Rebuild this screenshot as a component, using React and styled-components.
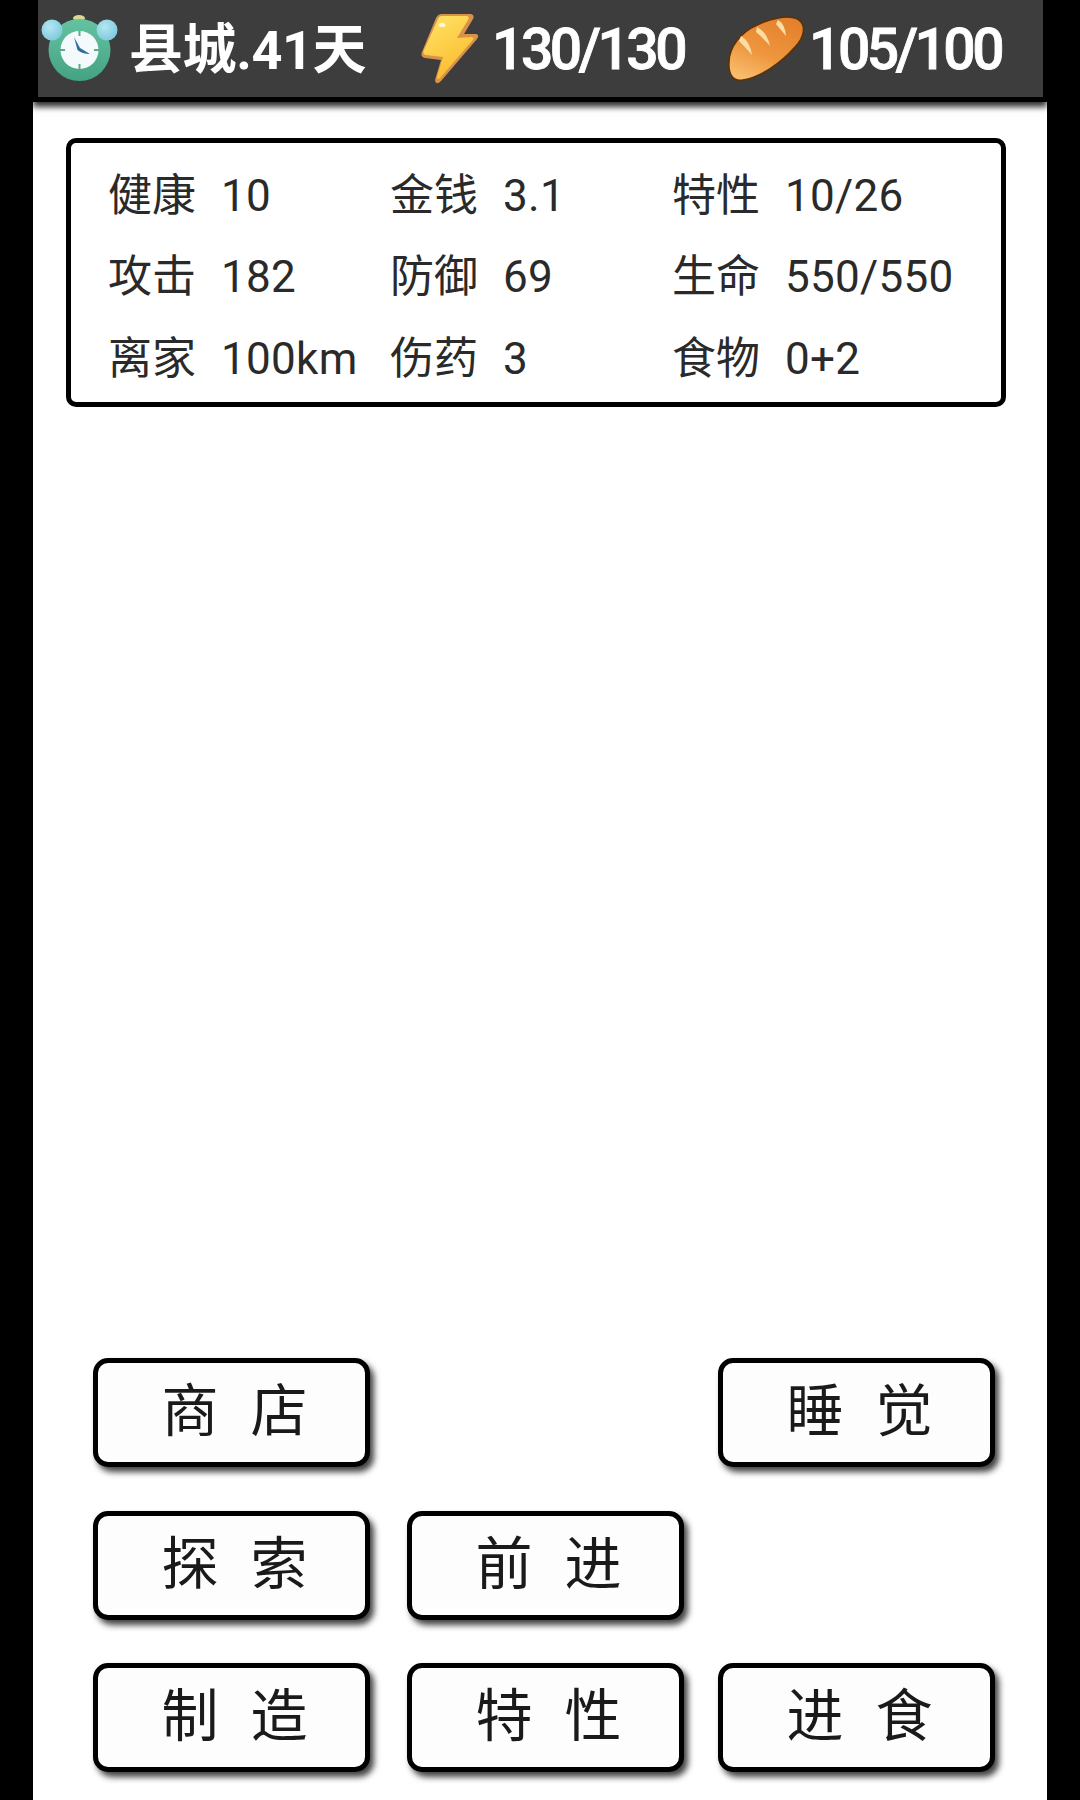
import React from "react";
import styled, { createGlobalStyle } from "styled-components";

const GlobalStyle = createGlobalStyle`
	html, body {
		margin: 0;
		padding: 0;
		background: #000;
	}
`;

const Screen = styled.div`
	width: 1014px;
	height: 1800px;
	margin-left: 33px;
	background: #fff;
	display: flex;
	flex-direction: column;
	overflow: hidden;
	font-family: Roboto, "Noto Sans CJK SC", sans-serif;
`;

const Header = styled.header`
	height: 102px;
	flex: none;
	background: #000;
	padding: 0 4px 5px 5px;
	box-sizing: border-box;
	box-shadow: 0 5px 6px rgba(0, 0, 0, 0.8);
`;

const Bar = styled.div`
	height: 97px;
	background: #3d3d3d;
	display: flex;
	align-items: center;
	padding-left: 3px;
	color: #fff;
	font-family: Roboto, "Noto Sans CJK SC", sans-serif;
	font-weight: 700;
`;

const Stat = styled.div`
	width: ${({ $width }) => $width}px;
	flex: none;
	display: flex;
	align-items: center;
	gap: ${({ $gap }) => $gap}px;
`;

const StatIcon = styled.svg`
	flex: none;
	display: block;
`;

const Place = styled.span`
	font-size: 54px;
	line-height: 60px;
	padding-top: 4px;
	letter-spacing: -0.4px;
	white-space: nowrap;
	margin-left: -2px;
`;

const Count = styled.span`
	font-size: 57px;
	line-height: 60px;
	padding-top: 2px;
	letter-spacing: -3.5px;
	font-weight: 500;
	white-space: nowrap;
	-webkit-text-stroke: 0.8px #fff;
`;

const Panel = styled.section`
	margin: 36px 41px 0 33px;
	height: 269px;
	box-sizing: border-box;
	border: 5px solid #000;
	border-radius: 10px;
	padding: 12px 0 0 37px;
	display: grid;
	grid-template-columns: 282px 282px 1fr;
	grid-auto-rows: 81.5px;
	color: #2a2a2a;
`;

const Cell = styled.div`
	display: flex;
	align-items: center;
	font-size: 44px;
	line-height: 1;
	white-space: nowrap;
`;

const Label = styled.span`
	width: 113px;
	flex: none;
	font-size: 44px;
	font-weight: 400;
`;

const Value = styled.span`
	font-weight: 400;
	letter-spacing: 0.3px;
`;

const Actions = styled.nav`
	margin-top: auto;
	padding: 0 0 28px 60px;
	display: grid;
	grid-template-columns: 314px 311px 277px;
	grid-auto-rows: 109px;
	row-gap: 43.5px;
`;

const ActionButton = styled.button`
	width: 277px;
	height: 109px;
	grid-column: ${({ $col }) => $col};
	box-sizing: border-box;
	border: 5px solid #000;
	border-radius: 15px;
	background: #fdfdfd;
	box-shadow: 4px 5px 6px rgba(0, 0, 0, 0.75);
	color: #1a1a1a;
	font-family: "Noto Sans CJK SC", sans-serif;
	font-size: 57px;
	line-height: 1;
	font-weight: 400;
	word-spacing: 19px;
	padding: 0 0 12px 6px;
`;

const ClockIcon = () => (
	<StatIcon width="77" height="68" viewBox="11 8 77 68">
		<defs>
			<linearGradient id="clockBody" x1="0" y1="0" x2="0" y2="1">
				<stop offset="0" stopColor="#63c3a0" />
				<stop offset="1" stopColor="#45a283" />
			</linearGradient>
			<radialGradient id="clockBell" cx="0.4" cy="0.35" r="0.7">
				<stop offset="0" stopColor="#b4e6f2" />
				<stop offset="1" stopColor="#7cc9dc" />
			</radialGradient>
		</defs>
		<ellipse cx="49" cy="11" rx="6" ry="3" fill="#d9d890" />
		<circle cx="49.5" cy="43" r="31" fill="url(#clockBody)" />
		<circle cx="22" cy="23" r="10.5" fill="url(#clockBell)" />
		<circle cx="77" cy="23" r="10.5" fill="url(#clockBell)" />
		<circle cx="49.5" cy="43" r="19" fill="#f4fafb" />
		<path d="M49.5 24v5M49.5 57v5M30 43h5M64 43h5" stroke="#5fa78f" strokeWidth="2" />
		<path d="M44 30 L47.5 43 Q52 47 60 47 L50 41 Z" fill="#2f6d9e" />
	</StatIcon>
);

const BoltIcon = () => (
	<StatIcon width="60" height="72" viewBox="10 8 60 72">
		<defs>
			<linearGradient id="boltFace" x1="0" y1="0" x2="0.5" y2="1">
				<stop offset="0" stopColor="#ffe56a" />
				<stop offset="1" stopColor="#fbbc2e" />
			</linearGradient>
		</defs>
		<path
			d="M32 9 L61 9 Q65 10 63 14 L54 29 L66 29 Q70 30 67 34 L31 76 Q26 81 25 75 L31 55 L15 53 Q10 52 12 47 L26 13 Q28 9 32 9 Z"
			fill="#d9924a"
		/>
		<path
			d="M32 11 L57 11 Q60 12 58 15 L47 33 L62 32 Q65 33 62 36 L30 73 Q27 76 27 72 L33 52 L16 50 Q12 49 14 45 L28 14 Q29 11 32 11 Z"
			fill="url(#boltFace)"
		/>
		<ellipse cx="32" cy="20" rx="3.5" ry="2" fill="#fff8d0" />
	</StatIcon>
);

const BreadIcon = () => (
	<StatIcon width="77" height="66" viewBox="9 11 77 66">
		<defs>
			<linearGradient id="breadCrust" x1="0.8" y1="0" x2="0.3" y2="1">
				<stop offset="0" stopColor="#e47f2c" />
				<stop offset="0.6" stopColor="#ee963e" />
				<stop offset="1" stopColor="#f8bc6a" />
			</linearGradient>
		</defs>
		<path
			d="M10 57 C10 42 22 27 38 20 C52 13 70 9 80 15 C87 20 86 32 76 42 C62 58 42 72 24 75 C14 77 9 69 10 57 Z"
			fill="url(#breadCrust)"
			stroke="#5a3208"
			strokeWidth="1.6"
		/>
		<path d="M22 31 Q31 36 33 50 Q26 42 20 36 Z" fill="#fbdca4" />
		<path d="M38 22 Q48 27 51 41 Q44 33 37 27 Z" fill="#fbdca4" />
		<path d="M59 15 Q66 19 67 31 Q62 25 57 19 Z" fill="#fbdca4" />
	</StatIcon>
);

const stats = [
	["健康", "10"],
	["金钱", "3.1"],
	["特性", "10/26"],
	["攻击", "182"],
	["防御", "69"],
	["生命", "550/550"],
	["离家", "100km"],
	["伤药", "3"],
	["食物", "0+2"],
];

const actions = [
	["商 店", 1],
	["睡 觉", 3],
	["探 索", 1],
	["前 进", 2],
	["制 造", 1],
	["特 性", 2],
	["进 食", 3],
];

const App = () => {
	return (
		<>
			<GlobalStyle />
			<Screen>
				<Header>
					<Bar>
						<Stat $width={379} $gap={13}>
							<ClockIcon />
							<Place>县城.41天</Place>
						</Stat>
						<Stat $width={308} $gap={12}>
							<BoltIcon />
							<Count>130/130</Count>
						</Stat>
						<Stat $width={270} $gap={4}>
							<BreadIcon />
							<Count>105/100</Count>
						</Stat>
					</Bar>
				</Header>
				<Panel>
					{stats.map(([label, value]) => (
						<Cell key={label}>
							<Label>{label}</Label>
							<Value>{value}</Value>
						</Cell>
					))}
				</Panel>
				<Actions>
					{actions.map(([text, col]) => (
						<ActionButton key={text} $col={col}>
							{text}
						</ActionButton>
					))}
				</Actions>
			</Screen>
		</>
	);
};

export default App;
